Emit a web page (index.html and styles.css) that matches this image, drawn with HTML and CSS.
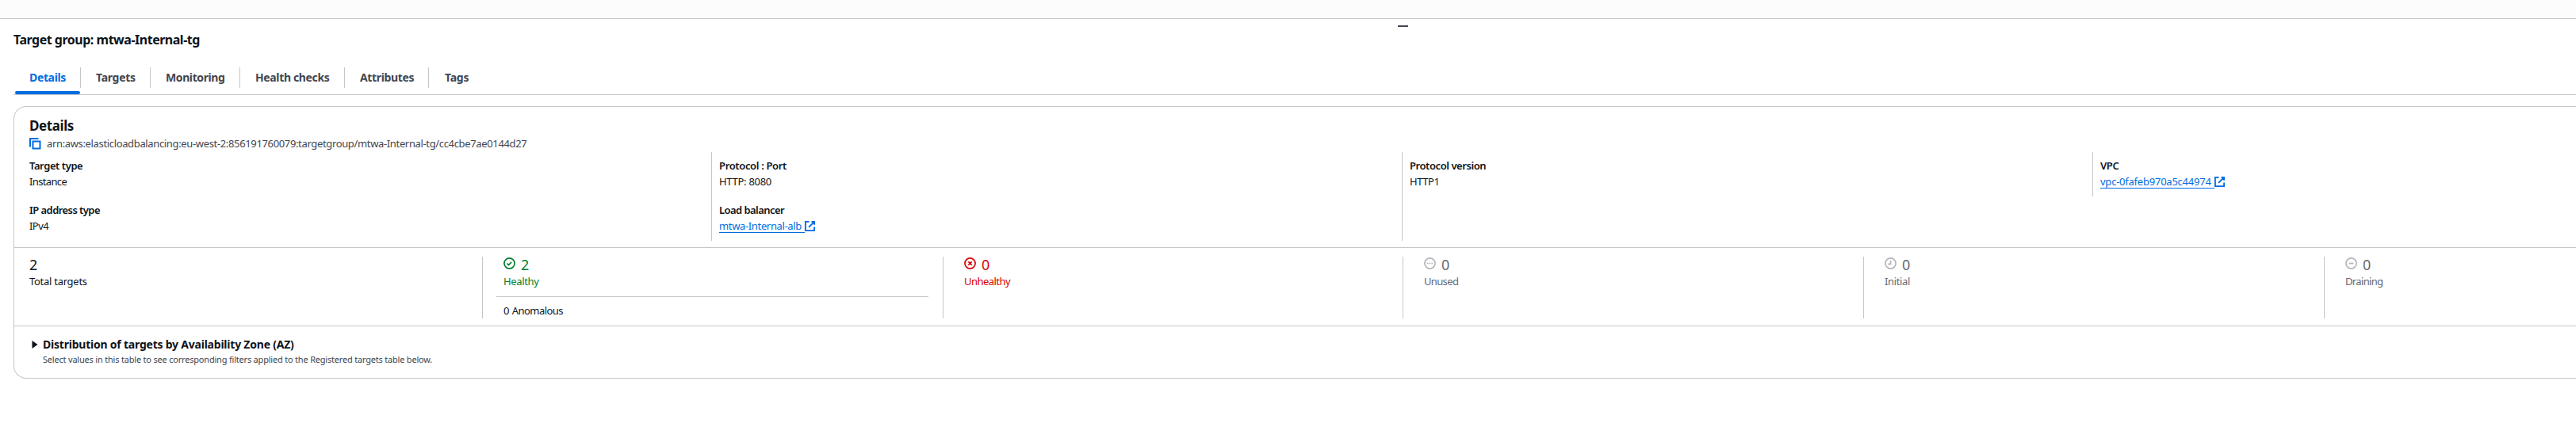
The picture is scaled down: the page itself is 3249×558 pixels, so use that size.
FILE: index.html
```html
<!DOCTYPE html>
<html lang="en">
<head>
<meta charset="utf-8">
<title>Target group</title>
<link rel="stylesheet" href="styles.css">
</head>
<body>
<div class="topbar"></div>
<div class="split-panel">
  <div class="drag-handle"></div>
  <h1 class="title">Target group: mtwa-Internal-tg</h1>
  <nav class="tabs">
    <a class="tab tab-details active">Details</a>
    <a class="tab tab-targets">Targets</a>
    <a class="tab tab-monitoring">Monitoring</a>
    <a class="tab tab-health">Health checks</a>
    <a class="tab tab-attributes">Attributes</a>
    <a class="tab tab-tags">Tags</a>
  </nav>
  <section class="card">
    <h2 class="card-title">Details</h2>
    <div class="arn">
      <svg class="copy" viewBox="0 0 15 15"><path d="M1 11.500V1h10.500M4.500 4.500h9v9h-9z"/></svg>
      <span class="arn-text">arn:aws:elasticloadbalancing:eu-west-2:856191760079:targetgroup/mtwa-Internal-tg/cc4cbe7ae0144d27</span>
    </div>
    <div class="columns">
      <div class="column">
        <dl class="pair"><dt class="ls-45">Target type</dt><dd class="ls-65">Instance</dd></dl>
        <dl class="pair"><dt class="ls-55">IP address type</dt><dd class="ls-55">IPv4</dd></dl>
      </div>
      <div class="column">
        <dl class="pair"><dt class="ls-35">Protocol : Port</dt><dd class="ls-25">HTTP: 8080</dd></dl>
        <dl class="pair"><dt class="ls-55">Load balancer</dt><dd><a class="link ls-35">mtwa-Internal-alb</a><svg class="external" viewBox="0 0 16 16"><path d="M10 2h4v4M6.500 9.500 14 2M14 9v5H2V2h5"/></svg></dd></dl>
      </div>
      <div class="column">
        <dl class="pair"><dt class="ls-45">Protocol version</dt><dd class="ls-45">HTTP1</dd></dl>
      </div>
      <div class="column short">
        <dl class="pair"><dt class="ls-35">VPC</dt><dd><a class="link ls-20">vpc-0fafeb970a5c44974</a><svg class="external" viewBox="0 0 16 16"><path d="M10 2h4v4M6.500 9.500 14 2M14 9v5H2V2h5"/></svg></dd></dl>
      </div>
    </div>
    <div class="stats">
      <div class="stat">
        <div class="count">2</div>
        <div class="name ls-25">Total targets</div>
      </div>
      <div class="stat healthy">
        <div class="count"><svg class="status" viewBox="0 0 16 16"><circle cx="8" cy="8" r="7"/><path d="m4.800 8 2.200 2.200 3.800-4"/></svg>2</div>
        <div class="name ls-35">Healthy</div>
        <div class="anomalous ls-50">0 Anomalous</div>
      </div>
      <div class="stat unhealthy">
        <div class="count"><svg class="status" viewBox="0 0 16 16"><circle cx="8" cy="8" r="7"/><path d="m5.700 5.700 4.600 4.600m0-4.600-4.600 4.600"/></svg>0</div>
        <div class="name ls-50">Unhealthy</div>
      </div>
      <div class="stat muted">
        <div class="count"><svg class="status" viewBox="0 0 16 16"><circle cx="8" cy="8" r="7"/><path d="M4 8h2M7 8h2M10 8h2"/></svg>0</div>
        <div class="name ls-65">Unused</div>
      </div>
      <div class="stat muted">
        <div class="count"><svg class="status" viewBox="0 0 16 16"><circle cx="8" cy="8" r="7"/><path d="M8 4v5H4.500"/></svg>0</div>
        <div class="name ls-35">Initial</div>
      </div>
      <div class="stat muted">
        <div class="count"><svg class="status" viewBox="0 0 16 16"><circle cx="8" cy="8" r="7"/><path d="M5 8h6"/></svg>0</div>
        <div class="name ls-65">Draining</div>
      </div>
    </div>
    <div class="distribution">
      <svg class="caret" viewBox="0 0 8 10"><path d="M.5 0v10L7.500 5z"/></svg>
      <div>
        <h3 class="dist-title">Distribution of targets by Availability Zone (AZ)</h3>
        <p class="dist-note">Select values in this table to see corresponding filters applied to the Registered targets table below.</p>
      </div>
    </div>
  </section>
</div>
</body>
</html>
```
FILE: styles.css
```css
* { box-sizing: border-box; margin: 0; padding: 0; }
body {
  background: #fff;
  color: #0f141a;
  font: 13px/20px "Noto Sans", "Open Sans", sans-serif;
  overflow: hidden;
  white-space: nowrap;
}
.topbar { height: 24px; background: #fcfcfc; border-bottom: 1px solid #c6c6cd; }
.split-panel { padding: 8px 0 0 17px; }
.drag-handle { width: 13px; height: 2px; margin-left: 1746px; background: #424650; }
.title { margin-top: 6px; font-size: 16px; line-height: 20px; font-weight: 700; letter-spacing: -.49px; }

.tabs { display: flex; height: 60px; padding: 25px 0 0 1px; border-bottom: 1px solid #c6c6cd; }
.tab {
  height: 26px;
  padding: 3px 0 0 19px;
  border-right: 1px solid #c6c6cd;
  color: #424650;
  font-size: 14px;
  font-weight: 700;
}
.tab-details { width: 84px; letter-spacing: -.36px; position: relative; }
.tab-targets { width: 88px; letter-spacing: -.29px; }
.tab-monitoring { width: 113px; letter-spacing: -.4px; }
.tab-health { width: 132px; letter-spacing: -.36px; }
.tab-attributes { width: 106px; letter-spacing: -.36px; }
.tab-tags { padding-left: 20px; border: 0; letter-spacing: -.25px; }
.tab.active { color: #006ce0; }
.tab.active::after {
  content: "";
  position: absolute;
  left: 1px;
  top: 30px;
  width: 82px;
  height: 4px;
  border-radius: 2px;
  background: #006ce0;
}

.card { height: 344px; margin-top: 14px; border: 1px solid #c6c6cd; border-right: 0; border-radius: 16px 0 0 16px; }
.card-title { padding: 13px 0 0 19px; font-size: 17px; line-height: 22px; letter-spacing: -.42px; }
.arn { display: flex; height: 22px; padding: 1px 0 0 19px; color: #424650; }
.copy { width: 15px; height: 15px; margin: 3px 7px 0 0; fill: none; stroke: #006ce0; stroke-width: 2; }
.arn-text { letter-spacing: -.35px; }

.columns { display: grid; grid-template-columns: 879px 871px 871px 1fr; height: 121px; padding-bottom: 8px; border-bottom: 1px solid #c6c6cd; }
.column { height: 112px; padding-left: 9px; border-left: 1px solid #c6c6cd; }
.column:first-child { padding-left: 19px; border: 0; }
.column.short { height: 56px; }
.pair { height: 56px; padding-top: 7px; }
dt { font-weight: 600; }
dd { display: flex; }
.link { height: 19px; padding-right: 4px; border-bottom: 1px solid #006ce0; color: #006ce0; }
.external { width: 15px; height: 15px; margin: 3px 0 0 -1px; fill: none; stroke: #006ce0; stroke-width: 2; }

.stats { display: grid; grid-template-columns: 590px 581px 580px 581px 581px 1fr; height: 99px; padding: 11px 0 9px; border-bottom: 1px solid #c6c6cd; }
.stat { padding-left: 26px; border-left: 1px solid #c6c6cd; }
.stat:first-child { padding-left: 19px; border: 0; }
.count { display: flex; height: 24px; margin-top: -2px; font-size: 18px; line-height: 24px; }
.status { width: 15px; height: 15px; margin: 3px 7px 0 0; fill: none; stroke: currentColor; stroke-width: 1.8; }
.name { margin-top: -1px; }
.healthy { color: #00802f; }
.unhealthy { color: #db0000; }
.muted { color: #656871; }
.muted .status { color: #b4b4bb; }
.anomalous { margin: 9px 18px 0 -9px; padding: 7px 0 0 9px; border-top: 1px solid #c6c6cd; color: #0f141a; word-spacing: 1px; }

.distribution { display: flex; padding: 13px 0 0 22px; }
.caret { width: 8px; height: 10px; margin: 5px 6px 0 0; fill: #0f141a; }
.dist-title { font-size: 14px; line-height: 20px; letter-spacing: -.22px; }
.dist-note { margin-top: 1px; color: #424650; font-size: 11px; line-height: 16px; letter-spacing: -.2px; }

.ls-20 { letter-spacing: -.23px; }
.ls-25 { letter-spacing: -.28px; }
.ls-35 { letter-spacing: -.35px; }
.ls-45 { letter-spacing: -.43px; }
.ls-50 { letter-spacing: -.54px; }
.ls-55 { letter-spacing: -.56px; }
.ls-65 { letter-spacing: -.65px; }
```
